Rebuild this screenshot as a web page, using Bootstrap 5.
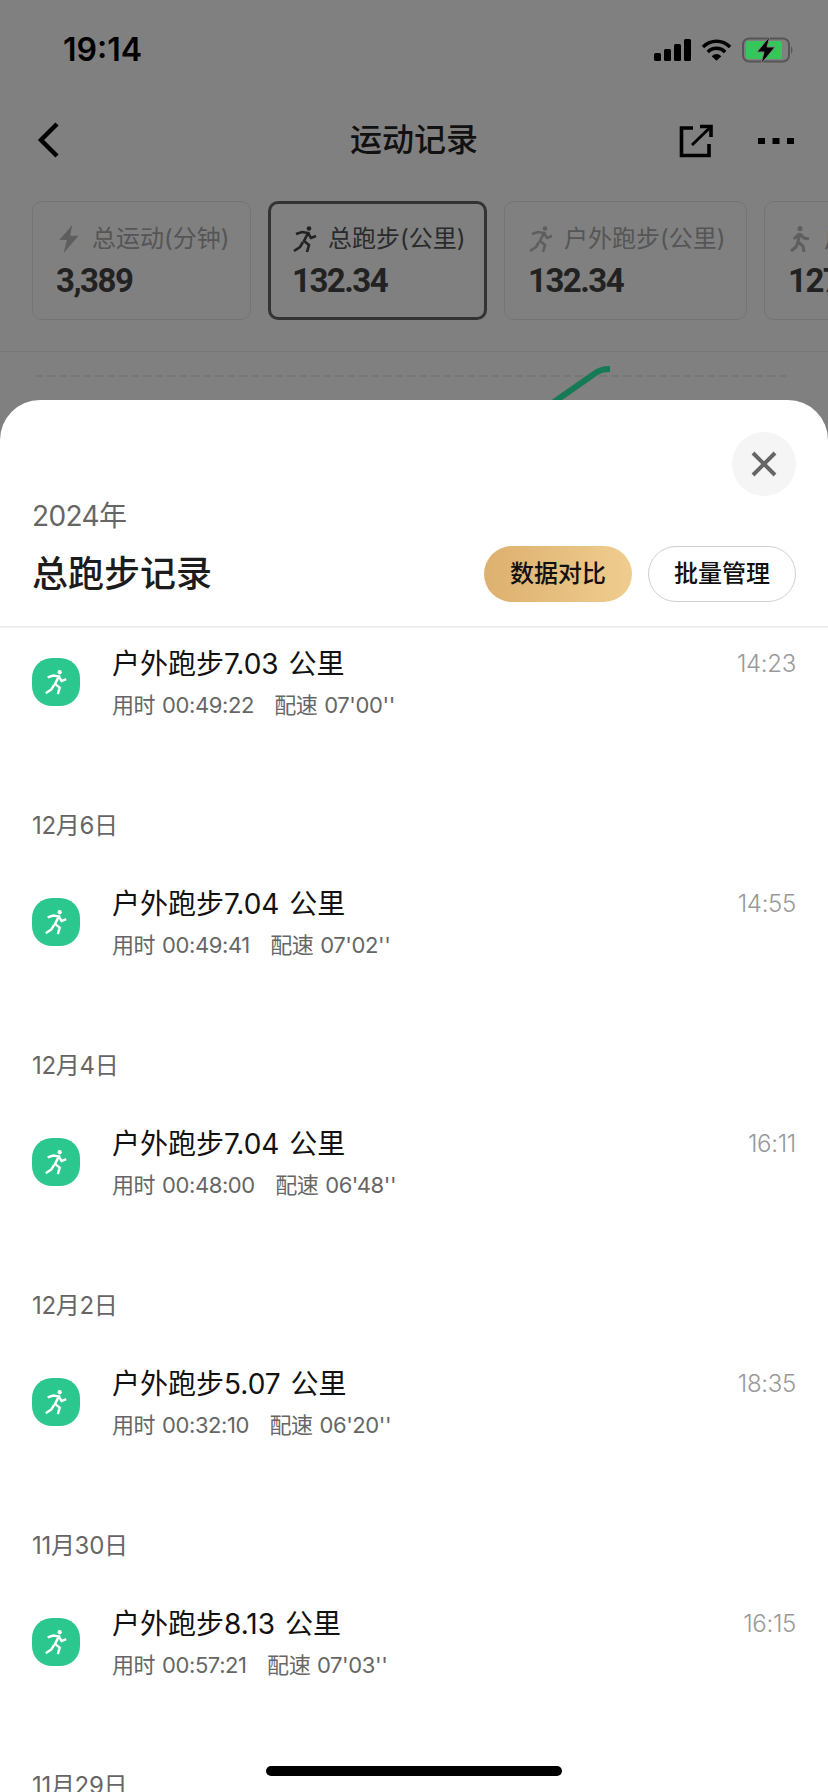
<!DOCTYPE html>
<html lang="zh"><head><meta charset="utf-8">
<link href="https://cdn.jsdelivr.net/npm/bootstrap@5.3.0/dist/css/bootstrap.min.css" rel="stylesheet">
<style>
html,body{margin:0;height:1792px;overflow:hidden;background:#808080}
body{font-family:"Inter","Noto Sans CJK SC",sans-serif;color:#000;position:relative}
.stat-bar{height:100px;padding:0 34px 0 63px}
.stat-time{font:600 32px/1 "Inter",sans-serif}
.nav-row{height:81px;padding:0 34px 0 37px;position:relative}
.nav-name{position:absolute;left:0;right:0;top:18px;text-align:center;font-size:32px;font-weight:500;line-height:44px;color:#111}
.tab-strip{gap:17px;padding-left:32px;overflow:hidden;height:119px;margin-top:20px}
.tab-box{flex:none;width:219px;height:119px;border:1px solid #747474;border-radius:10px;padding:19px 0 0 24px}
.tab-wide{width:243px}
.tab-on{border:3px solid #333;padding:17px 0 0 22px}
.tab-lab{height:36px;gap:11px;font-size:24px;line-height:36px;color:#555;white-space:nowrap}
.tab-on .tab-lab{color:#2a2a2a}
.tab-num{font:700 33px/44px "Roboto",sans-serif;color:#222;white-space:nowrap;margin-top:2px;margin-left:-1px;letter-spacing:-1.500px}
.chart-top{margin-top:31px;border-top:1px solid #787878;height:60px}
.sheet{position:absolute;left:0;right:0;top:400px;bottom:0;background:#fff;border-radius:40px 40px 0 0;overflow:hidden}
.sheet-close{position:absolute;right:32px;top:32px;width:64px;height:64px;border-radius:50%;background:#f5f5f5}
.sheet-head{height:228px;padding:96px 32px 0 32px;border-bottom:2px solid #efefef}
.sheet-year{font-size:28px;line-height:40px;color:#666;letter-spacing:-.6px;margin-bottom:10px}
.sheet-name{font-size:36px;font-weight:500;line-height:50px;color:#1c1c1c}
.pill-btn{width:148px;height:56px;border-radius:28px;padding:0;font-size:24px;font-weight:500;line-height:1;color:#111}
.pill-gold{background:linear-gradient(90deg,#ddb06f,#efcd8f);border:0}
.pill-line{background:#fff;border:1px solid #d0d0d0}
.rec-group{height:240px}
.rec-first{height:106px;padding-top:16px}
.rec-row{padding:0 32px;height:90px}
.rec-icon{width:48px;height:48px;border-radius:20px;background:#2cc78f;flex:none;margin-top:14px}
.rec-body{margin-left:32px}
.rec-title{font-size:28px;line-height:40px;color:#111;word-spacing:2px}
.rec-sub{font-size:22px;line-height:42px;color:#666;white-space:pre;letter-spacing:-.4px;word-spacing:1px}
.rec-time{font-size:24px;line-height:40px;font-weight:300;color:#999;letter-spacing:-.3px}
.rec-date{padding-left:32px;height:150px;padding-top:74px;font-size:24px;line-height:36px;color:#666;letter-spacing:-.3px}
.home-bar{position:absolute;left:266px;bottom:16px;width:296px;height:10px;border-radius:5px;background:#000}
</style></head><body>
<div class="stat-bar d-flex align-items-center justify-content-between">
  <div class="stat-time">19:14</div>
  <div class="d-flex align-items-center" style="gap:10px">
    <svg width="37" height="24" viewBox="0 0 37 24"><rect x="0" y="15" width="7" height="8" rx="1.500"/><rect x="10" y="11" width="7" height="12" rx="1.500"/><rect x="20" y="6" width="7" height="17" rx="1.500"/><rect x="30" y="1" width="7" height="22" rx="1.500"/></svg>
    <svg width="31" height="24" viewBox="0 0 32 24"><path d="M2 9C10 1 22 1 30 9" fill="none" stroke="#000" stroke-width="3.600"/><path d="M7 14C12 9 20 9 25 14" fill="none" stroke="#000" stroke-width="3.600"/><path d="M11 18.500Q16 14 21 18.500L16 23Z"/></svg>
    <svg width="52" height="28" viewBox="0 0 52 28"><rect x="1" y="2.500" width="46" height="23" rx="6" fill="none" stroke="#555" stroke-width="2"/><rect x="4" y="5" width="36" height="18" rx="2" fill="#35c75a"/><path d="M49 10q3 4 0 8z" fill="#555"/><path d="M28 0L15 16H22L19 28L33 11H25Z" stroke="#808080" stroke-width="1"/></svg>
  </div>
</div>
<div class="nav-row d-flex align-items-center justify-content-between">
  <svg width="24" height="38" viewBox="0 0 24 38" style="margin-top:-2px"><path d="M20 3L4 19L20 35" fill="none" stroke="#000" stroke-width="4.500"/></svg>
  <div class="nav-name">运动记录</div>
  <div class="d-flex align-items-center" style="gap:45px;position:relative">
    <svg width="34" height="34" viewBox="0 0 34 34"><path d="M14 4H2.500V31.500H30V20" fill="none" stroke="#000" stroke-width="3.600"/><path d="M21 2.500H32V13" fill="none" stroke="#000" stroke-width="3.600"/><path d="M31 3.500L13 21" fill="none" stroke="#000" stroke-width="3"/></svg>
    <svg width="36" height="8" viewBox="0 0 36 8"><rect width="7" height="6" y="1"/><rect x="14.500" width="7" height="6" y="1"/><rect x="29" width="7" height="6" y="1"/></svg>
  </div>
</div>
<div class="tab-strip d-flex">
  <div class="tab-box"><div class="tab-lab d-flex align-items-center"><svg width="24" height="30" viewBox="0 0 22 28"><path d="M14 1L2 15H9L6 27L20 11H12Z" fill="#5e5e5e"/></svg><span>总运动(分钟)</span></div><div class="tab-num">3,389</div></div>
  <div class="tab-box tab-on"><div class="tab-lab d-flex align-items-center"><svg width="24" height="28" viewBox="0 0 24 28" fill="none" stroke="#222" stroke-width="2.600"><circle cx="16" cy="3.500" r="2.300" fill="#222" stroke="none"/><path d="M3 9L9 7L15 8L11 16L16 20L14 27"/><path d="M10 17L7 22L1 26"/><path d="M15 8L18 13L23 11"/></svg><span>总跑步(公里)</span></div><div class="tab-num">132.34</div></div>
  <div class="tab-box tab-wide"><div class="tab-lab d-flex align-items-center"><svg width="24" height="28" viewBox="0 0 24 28" fill="none" stroke="#5e5e5e" stroke-width="2.600"><circle cx="16" cy="3.500" r="2.300" fill="#5e5e5e" stroke="none"/><path d="M3 9L9 7L15 8L11 16L16 20L14 27"/><path d="M10 17L7 22L1 26"/><path d="M15 8L18 13L23 11"/></svg><span>户外跑步(公里)</span></div><div class="tab-num">132.34</div></div>
  <div class="tab-box tab-wide"><div class="tab-lab d-flex align-items-center"><svg width="24" height="28" viewBox="0 0 24 28" fill="none" stroke="#5e5e5e" stroke-width="3"><circle cx="11" cy="3.500" r="2.600" fill="#5e5e5e" stroke="none"/><path d="M11 8L9 17L14 21L15 27"/><path d="M9 17L7 22L2 26"/><path d="M10 9L5 14M11 9L15 13L20 14"/></svg><span>户外健走(公里)</span></div><div class="tab-num">127.30</div></div>
</div>
<div class="chart-top">
  <svg width="828" height="60" viewBox="0 0 828 60" class="d-block"><path d="M35 24H786" stroke="#737373" stroke-width="1.500" stroke-dasharray="8 4" fill="none"/><path d="M554 50L594 22Q600 17 610 17" stroke="#167a57" stroke-width="6" fill="none"/></svg>
</div>

<div class="sheet">
  <div class="sheet-close d-flex align-items-center justify-content-center"><svg width="26" height="26" viewBox="0 0 26 26"><path d="M2 2L24 24M24 2L2 24" stroke="#666" stroke-width="4" fill="none"/></svg></div>
  <div class="sheet-head">
    <div class="sheet-year">2024年</div>
    <div class="d-flex justify-content-between align-items-center">
      <div class="sheet-name">总跑步记录</div>
      <div class="d-flex" style="gap:16px"><button class="btn pill-btn pill-gold">数据对比</button><button class="btn pill-btn pill-line">批量管理</button></div>
    </div>
  </div>
  <div>
    <div class="rec-first"><div class="rec-row d-flex"><div class="rec-icon d-flex align-items-center justify-content-center"><svg width="24" height="26" viewBox="0 0 24 28" fill="none" stroke="#fff" stroke-width="2.600"><circle cx="16" cy="3.500" r="2.300" fill="#fff" stroke="none"/><path d="M3 9L9 7L15 8L11 16L16 20L14 27"/><path d="M10 17L7 22L1 26"/><path d="M15 8L18 13L23 11"/></svg></div><div class="rec-body flex-grow-1"><div class="rec-title">户外跑步7.03 公里</div><div class="rec-sub">用时 00:49:22   配速 07'00''</div></div><div class="rec-time">14:23</div></div></div>
    <div class="rec-group"><div class="rec-date">12月6日</div><div class="rec-row d-flex"><div class="rec-icon d-flex align-items-center justify-content-center"><svg width="24" height="26" viewBox="0 0 24 28" fill="none" stroke="#fff" stroke-width="2.600"><circle cx="16" cy="3.500" r="2.300" fill="#fff" stroke="none"/><path d="M3 9L9 7L15 8L11 16L16 20L14 27"/><path d="M10 17L7 22L1 26"/><path d="M15 8L18 13L23 11"/></svg></div><div class="rec-body flex-grow-1"><div class="rec-title">户外跑步7.04 公里</div><div class="rec-sub">用时 00:49:41   配速 07'02''</div></div><div class="rec-time">14:55</div></div></div>
    <div class="rec-group"><div class="rec-date">12月4日</div><div class="rec-row d-flex"><div class="rec-icon d-flex align-items-center justify-content-center"><svg width="24" height="26" viewBox="0 0 24 28" fill="none" stroke="#fff" stroke-width="2.600"><circle cx="16" cy="3.500" r="2.300" fill="#fff" stroke="none"/><path d="M3 9L9 7L15 8L11 16L16 20L14 27"/><path d="M10 17L7 22L1 26"/><path d="M15 8L18 13L23 11"/></svg></div><div class="rec-body flex-grow-1"><div class="rec-title">户外跑步7.04 公里</div><div class="rec-sub">用时 00:48:00   配速 06'48''</div></div><div class="rec-time">16:11</div></div></div>
    <div class="rec-group"><div class="rec-date">12月2日</div><div class="rec-row d-flex"><div class="rec-icon d-flex align-items-center justify-content-center"><svg width="24" height="26" viewBox="0 0 24 28" fill="none" stroke="#fff" stroke-width="2.600"><circle cx="16" cy="3.500" r="2.300" fill="#fff" stroke="none"/><path d="M3 9L9 7L15 8L11 16L16 20L14 27"/><path d="M10 17L7 22L1 26"/><path d="M15 8L18 13L23 11"/></svg></div><div class="rec-body flex-grow-1"><div class="rec-title">户外跑步5.07 公里</div><div class="rec-sub">用时 00:32:10   配速 06'20''</div></div><div class="rec-time">18:35</div></div></div>
    <div class="rec-group"><div class="rec-date">11月30日</div><div class="rec-row d-flex"><div class="rec-icon d-flex align-items-center justify-content-center"><svg width="24" height="26" viewBox="0 0 24 28" fill="none" stroke="#fff" stroke-width="2.600"><circle cx="16" cy="3.500" r="2.300" fill="#fff" stroke="none"/><path d="M3 9L9 7L15 8L11 16L16 20L14 27"/><path d="M10 17L7 22L1 26"/><path d="M15 8L18 13L23 11"/></svg></div><div class="rec-body flex-grow-1"><div class="rec-title">户外跑步8.13 公里</div><div class="rec-sub">用时 00:57:21   配速 07'03''</div></div><div class="rec-time">16:15</div></div></div>
    <div class="rec-group"><div class="rec-date">11月29日</div></div>
  </div>
</div>
<div class="home-bar"></div>
</body></html>
